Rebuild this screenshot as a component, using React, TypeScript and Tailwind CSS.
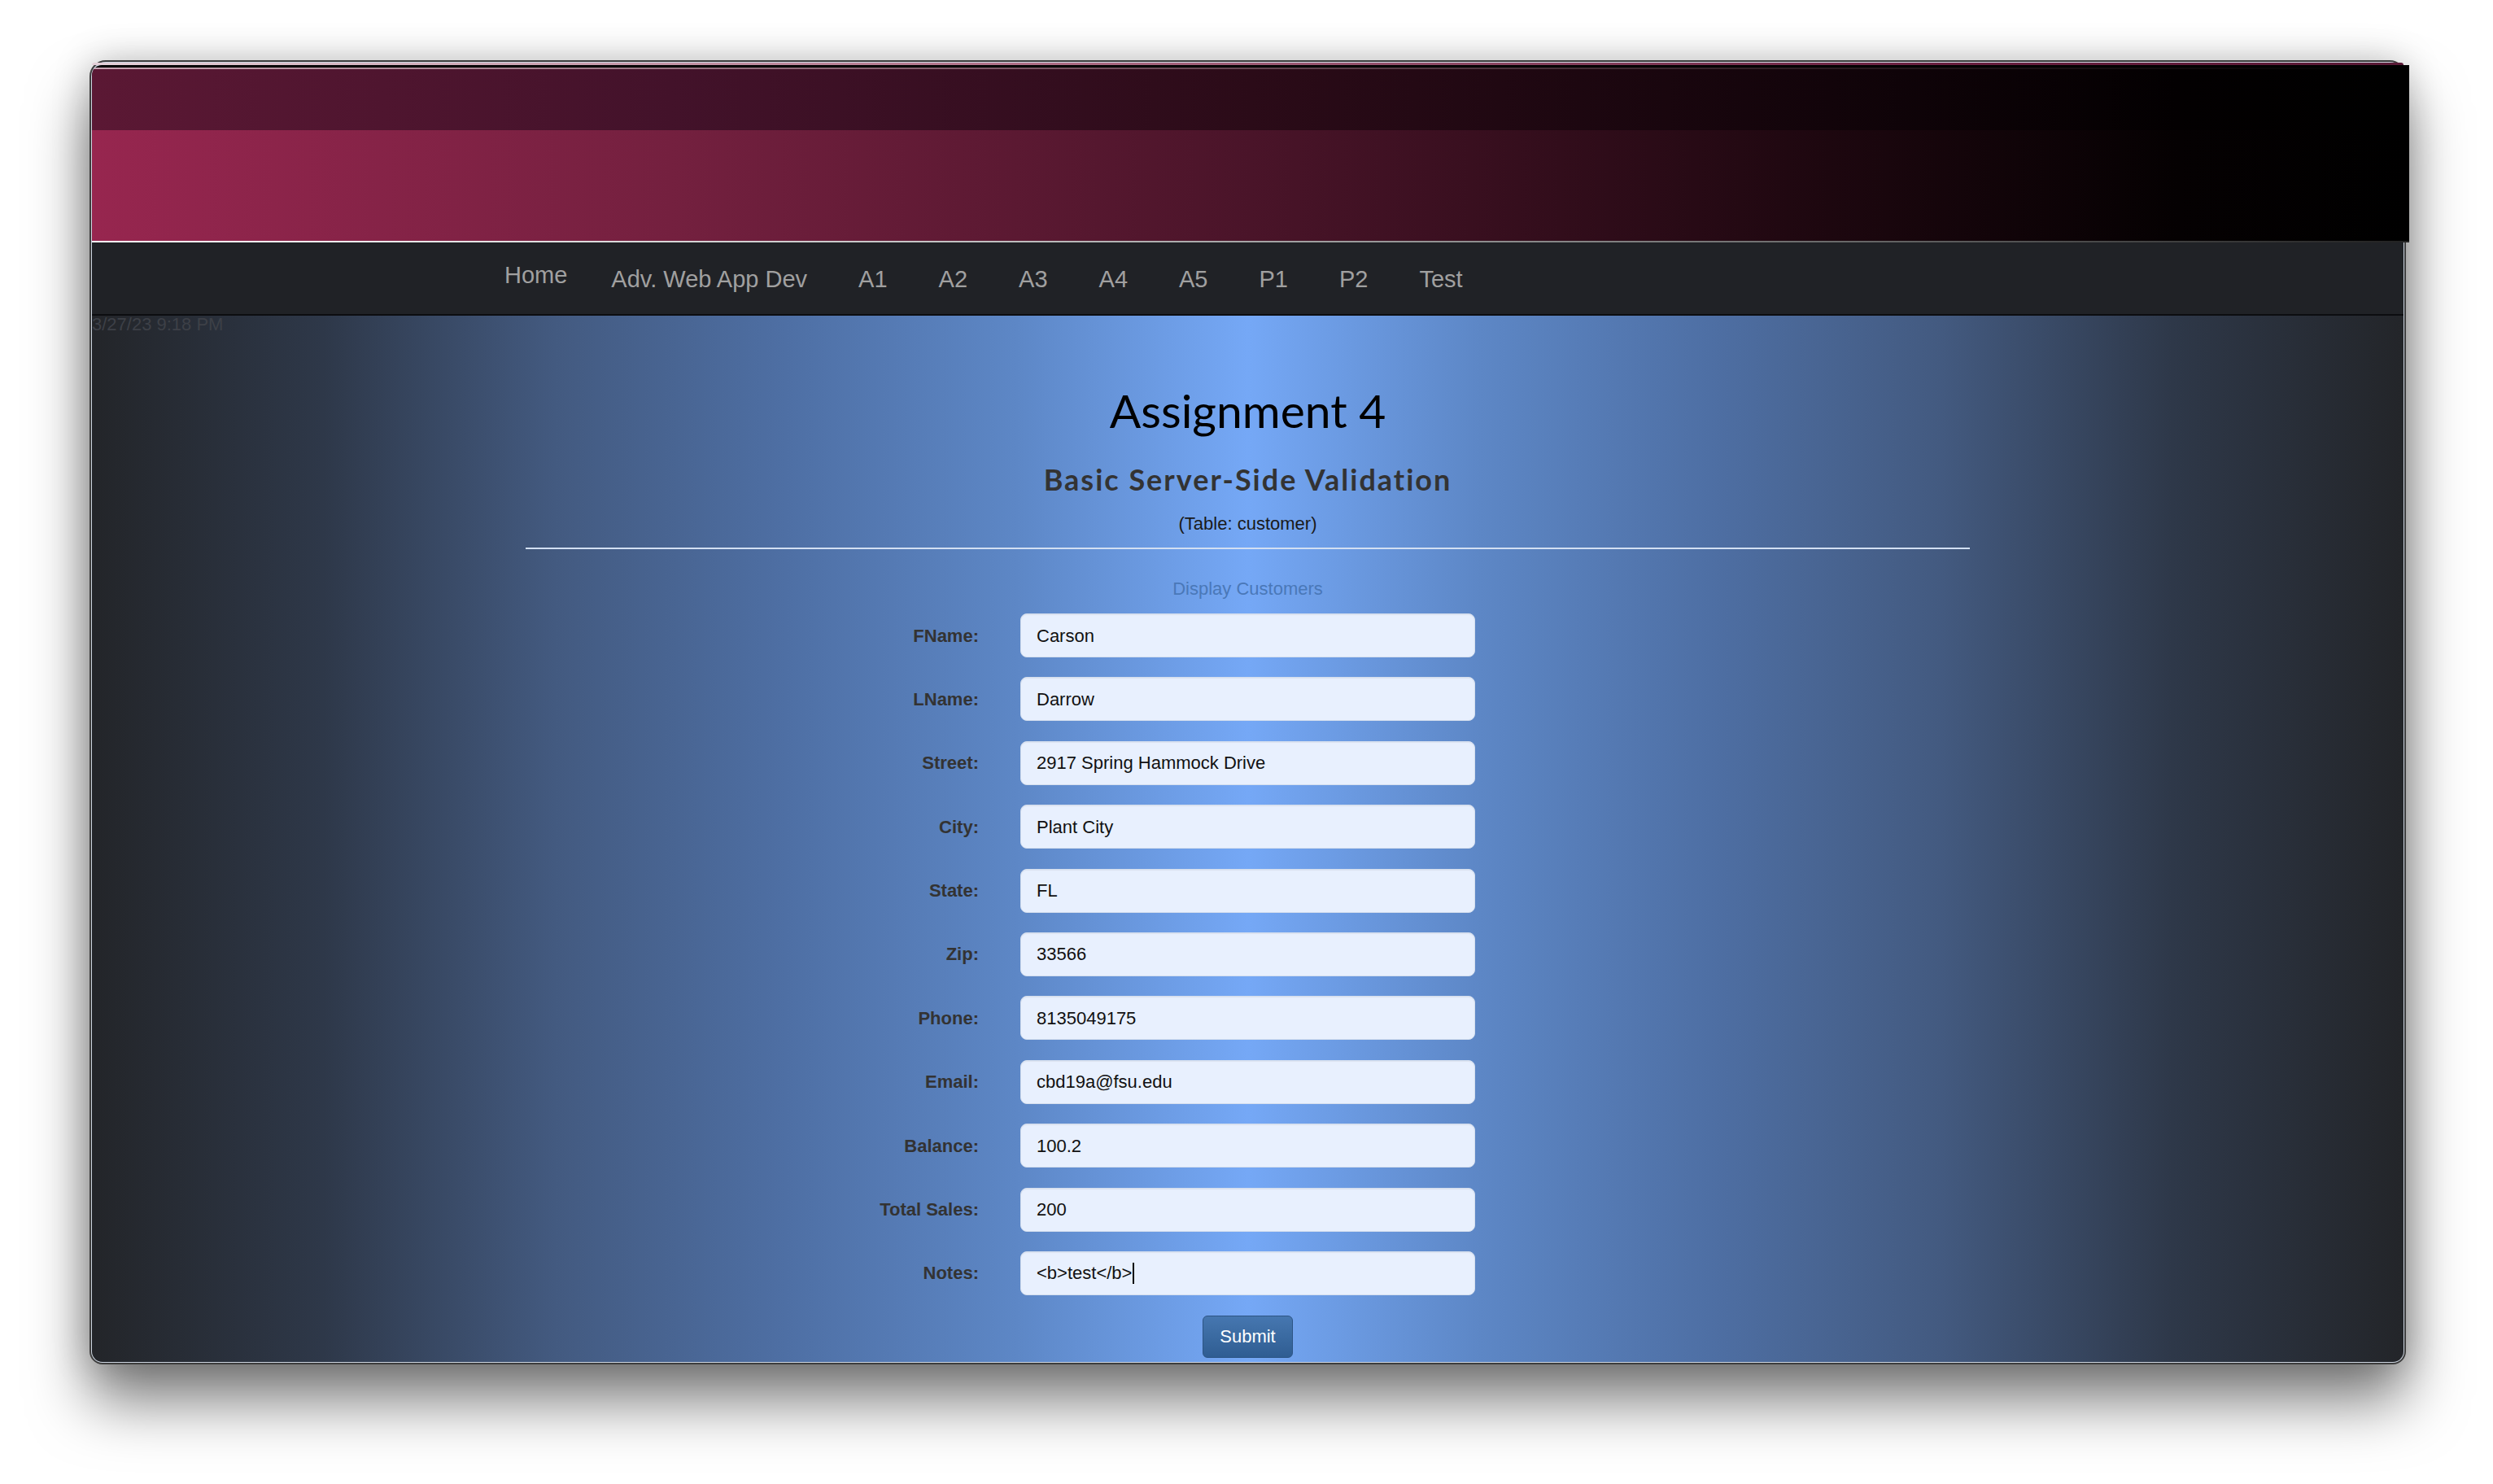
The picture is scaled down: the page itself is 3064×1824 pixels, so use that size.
import React from "react";

const fields: [string, string][] = [
  ["FName:", "Carson"],
  ["LName:", "Darrow"],
  ["Street:", "2917 Spring Hammock Drive"],
  ["City:", "Plant City"],
  ["State:", "FL"],
  ["Zip:", "33566"],
  ["Phone:", "8135049175"],
  ["Email:", "cbd19a@fsu.edu"],
  ["Balance:", "100.2"],
  ["Total Sales:", "200"],
  ["Notes:", "<b>test</b>"],
];

const navItems = ["Adv. Web App Dev", "A1", "A2", "A3", "A4", "A5", "P1", "P2", "Test"];

export default function App() {
  return (
    <div className="w-[3064px] h-[1824px] bg-white overflow-hidden pt-[74px] pl-[110px] font-['Liberation_Sans',Arial,sans-serif]">
      <div className="relative w-[2847px] h-[1603px] flex flex-col border-2 border-[#3d3d3d] rounded-t-[20px] rounded-b-[16px] bg-[#cdd5e0] p-[1px] shadow-[0_46px_72px_rgba(0,0,0,0.5),0_0_46px_rgba(0,0,0,0.22)]">
        {/* top light strip */}
        <div className="h-[3px] rounded-t-[17px] bg-[linear-gradient(to_right,#e4d0d8,#b07088_40%,#6a2040_80%,#5a1a36)]" />
        {/* header */}
        <div className="w-[calc(100%+7px)] flex flex-col rounded-tl-[12px] overflow-hidden">
          <div className="h-[3px] bg-black" />
          <div className="h-[2px] bg-[linear-gradient(to_right,#c7a3b1,#7a5463_40%,#2a1a20_75%,#000)]" />
          <div className="h-[75px] bg-[linear-gradient(to_right,#5b1834_0%,#43122a_25%,#2b0b18_50%,#12040a_75%,#030001_90%,#000_100%)]" />
          <div className="h-[136px] bg-[linear-gradient(to_right,#97264f_0%,#74203f_25%,#4a1429_50%,#1d070f_75%,#050102_90%,#000_100%)]" />
          <div className="h-[2px] bg-[linear-gradient(to_right,#ffffff,#bdbdbd_40%,#6a6a6a_75%,#222)]" />
        </div>
        {/* nav */}
        <div className="h-[90px] bg-[#202226] border-b-2 border-[#0c0d10] flex items-start pl-[507px] text-[29px] leading-[40px] text-[#a0a0a0]">
          <span className="pt-[20px] mr-[54px]">Home</span>
          <div className="flex gap-[63px] pt-[25px]">
            {navItems.map((n) => (
              <span key={n}>{n}</span>
            ))}
          </div>
        </div>
        {/* content */}
        <div className="relative flex-1 overflow-hidden rounded-b-[13px] bg-[linear-gradient(to_right,#232529_0%,#2e3849_10%,#435a80_20%,#4e6fa4_30%,#5d87c6_40%,#75a8f6_50%,#5d87c6_60%,#4e6fa4_70%,#435a80_80%,#2e3849_90%,#232529_100%)]">
          <div className="absolute top-[-2px] left-0 text-[22px] leading-[26px] text-[#3d4047] whitespace-nowrap">3/27/23 9:18 PM</div>
          <div className="flex flex-col items-center pt-[82px]">
            <h1 className="font-['Lato',sans-serif] text-[57px] leading-[68px] text-black font-normal">Assignment 4</h1>
            <h2 className="mt-[30px] font-['Lato',sans-serif] text-[36px] leading-[42px] font-bold tracking-[2px] text-[#333]">Basic Server-Side Validation</h2>
            <p className="mt-[21px] text-[22px] leading-[26px] text-[#1a1a1a]">(Table: customer)</p>
            <div className="mt-[16px] h-[2px] w-[1775px] bg-[#d2dff2]" />
            <p className="mt-[36px] text-[22px] leading-[26px] text-[#4a78b8]">Display Customers</p>
          </div>
          <div className="mt-[17px] flex flex-col gap-[24.4px]">
            {fields.map(([label, value]) => (
              <div key={label} className="grid grid-cols-[1fr_559px_1fr] items-center h-[54px]">
                <label className="text-right pr-[51px] text-[22px] font-bold text-[#333]">{label}</label>
                <div className="h-[54px] rounded-[8px] bg-[#e8f0fe] border border-[#d5dfee] shadow-[inset_0_1px_1px_rgba(0,0,0,0.06)] flex items-center pl-[19px] text-[22px] text-[#111]">
                  <span>{value}</span>
                  {label === "Notes:" && <span className="inline-block w-[2px] h-[26px] bg-black ml-[1px]" />}
                </div>
                <div />
              </div>
            ))}
          </div>
          <div className="mt-[25px] flex justify-center">
            <button className="h-[52px] w-[111px] rounded-[6px] border border-[#2c5484] bg-[linear-gradient(to_bottom,#4677b0,#2f5d92)] text-white text-[22px]">Submit</button>
          </div>
        </div>
      </div>
    </div>
  );
}
